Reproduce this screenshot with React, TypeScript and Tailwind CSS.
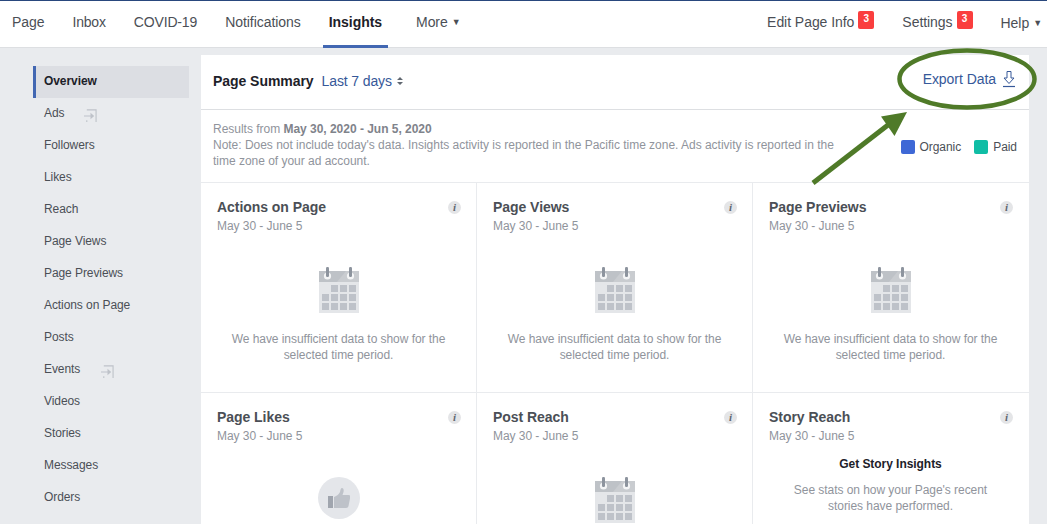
const SIDE_ITEMS = [
  'Ads',
  'Followers',
  'Likes',
  'Reach',
  'Page Views',
  'Page Previews',
  'Actions on Page',
  'Posts',
  'Events',
  'Videos',
  'Stories',
  'Messages',
  'Orders',
]

function Badge() {
  return (
    <span className="ml-1 mt-[10px] flex h-[18px] w-4 items-center justify-center self-start rounded-[2px] bg-[#fa3e3e] pb-[2px] text-[10px] font-bold text-white">
      3
    </span>
  )
}

function Caret() {
  return <span className="ml-1 text-[9px] leading-none text-[#4b4f56]">▼</span>
}

function EnterIcon() {
  return (
    <svg width="13" height="13" viewBox="0 0 14 14" fill="none" className="text-[#bec2c9]">
      <path d="M3 1h10v13" stroke="currentColor" strokeWidth="1.2" />
      <path d="M3 12v2" stroke="currentColor" strokeWidth="1.2" />
      <path d="M0 7h7V4l4 3.5L7 11V8.2H0z" fill="currentColor" />
    </svg>
  )
}

function InfoDot() {
  return (
    <span className="flex h-[13px] w-[13px] items-center justify-center rounded-full bg-[#e4e5e7] font-['Liberation_Serif',serif] text-[11px] font-bold italic leading-none text-[#606770]">
      i
    </span>
  )
}

function CalendarIcon() {
  return (
    <svg width="40" height="46" viewBox="0 0 40 46">
      <rect x="0" y="4" width="40" height="42" fill="#e4e6e9" />
      <rect x="0" y="4" width="40" height="11" fill="#bec2c7" />
      <path d="M18 15 27 4h13v11z" fill="#c9ccd0" />
      <circle cx="8.5" cy="9" r="3.6" fill="#f4f5f6" />
      <circle cx="31.5" cy="9" r="3.6" fill="#f4f5f6" />
      <rect x="7" y="0" width="3" height="10" rx="1.2" fill="#8d949e" />
      <rect x="30" y="0" width="3" height="10" rx="1.2" fill="#8d949e" />
      {[12, 21, 30].map((x) => (
        <rect key={x} x={x} y="18" width="7" height="7" fill="#bec2c9" />
      ))}
      {[3, 12, 21, 30].map((x) => (
        <g key={x}>
          <rect x={x} y="27" width="7" height="7" fill="#bec2c9" />
          <rect x={x} y="36" width="7" height="7" fill="#bec2c9" />
        </g>
      ))}
    </svg>
  )
}

function ThumbIcon() {
  return (
    <div className="flex h-[42px] w-[42px] items-center justify-center rounded-full bg-[#e4e6ea]">
      <svg width="22" height="22" viewBox="0 0 22 22">
        <rect x="0" y="9" width="5" height="12" fill="#a0a5ae" />
        <path
          d="M6 10c3-1 5-3 6-5 .4-2 .8-4 2-4 1.500 0 2 2 1.500 4l-1 3h6c1.500 0 2 1 1.800 2L20.500 19c-.3 1.200-1 2-2.500 2H6z"
          fill="#bec2c9"
        />
      </svg>
    </div>
  )
}

function Card({ title, children, last }: { title: string; children: React.ReactNode; last?: boolean }) {
  return (
    <div className={`relative h-[210px] border-b border-[#e9ebee] pt-[15px] pl-4 ${last ? 'pr-[17px]' : 'border-r pr-4'}`}>
      <div className="flex items-start justify-between">
        <h3 className="text-sm font-bold leading-[18px] text-[#4b4f56]">{title}</h3>
        <span className="mr-[-1px] mt-[3px]">
          <InfoDot />
        </span>
      </div>
      <p className="mt-[2px] text-xs leading-4 text-[#90949c]">May 30 - June 5</p>
      {children}
    </div>
  )
}

function EmptyCard({ title, last }: { title: string; last?: boolean }) {
  return (
    <Card title={title} last={last}>
      <div className="mt-[33px] flex justify-center">
        <CalendarIcon />
      </div>
      <p className="mx-auto mt-[18px] w-[230px] text-center text-xs leading-4 text-[#90949c]">
        We have insufficient data to show for the selected time period.
      </p>
    </Card>
  )
}

export default function App() {
  return (
    <div className="relative h-[524px] w-[1047px] overflow-hidden bg-[#e9ebee] font-['Liberation_Sans',Arial,sans-serif] tracking-[-0.05px]">
      <nav className="flex h-[48px] items-center justify-between border-t border-b border-t-[#29487d] border-b-[#dddfe2] bg-white pl-3 pr-[5px] text-sm text-[#4b4f56]">
        <div className="flex h-full items-center gap-7 pb-[4px]">
          <span>Page</span>
          <span className="tracking-[-0.2px]">Inbox</span>
          <span className="tracking-[-0.15px]">COVID-19</span>
          <span>Notifications</span>
          <span className="relative font-bold text-[#1d2129]">
            Insights
            <span className="absolute -left-[6px] -right-[6px] top-[33px] h-[3px] bg-[#4267b2]" />
          </span>
          <span className="ml-[6px] flex items-center">
            More
            <Caret />
          </span>
        </div>
        <div className="flex h-full items-center">
          <span className="mb-[4px]">Edit Page Info</span>
          <Badge />
          <span className="mb-[4px] ml-7">Settings</span>
          <Badge />
          <span className="mb-[2px] ml-7 flex items-center">
            Help
            <Caret />
          </span>
        </div>
      </nav>

      <div className="flex items-start pl-[33px] pt-[7px]">
        <aside className="mt-[11px] w-[156px] text-xs tracking-[-0.08px] text-[#4b4f56]">
          <div className="flex h-8 items-center border-l-[3px] border-[#4267b2] bg-[#dcdee3] pb-[2px] pl-2 font-bold text-[#1d2129]">
            Overview
          </div>
          {SIDE_ITEMS.map((item) => (
            <div key={item} className="flex h-8 items-center pl-[11px]">
              <span className="mb-[2px]">{item}</span>
              {item === 'Ads' && (
                <span className="ml-5 mt-[2px]">
                  <EnterIcon />
                </span>
              )}
              {item === 'Events' && (
                <span className="ml-[21px] mt-[2px]">
                  <EnterIcon />
                </span>
              )}
            </div>
          ))}
        </aside>

        <main className="ml-3 w-[828px] bg-white">
          <header className="flex h-[55px] items-center justify-between border-b border-[#dddfe2] pl-3 pr-[13px]">
            <div className="mb-[2px] flex items-center text-sm">
              <span className="font-bold text-[#1d2129]">Page Summary</span>
              <span className="ml-[8px] tracking-[-0.12px] text-[#365899]">Last 7 days</span>
              <svg width="6" height="8" viewBox="0 0 6 8" className="ml-[5px]">
                <path d="M3 0l3 3H0zM3 8L0 5h6z" fill="#606770" />
              </svg>
            </div>
            <div className="mb-[6px] flex items-center text-sm text-[#365899]">
              <span>Export Data</span>
              <svg width="14" height="17" viewBox="0 0 14 17" fill="none" className="ml-[6px]" stroke="#365899">
                <path d="M5 .5h4v6.500h3L7 12.500 2 7h3z" strokeWidth="1" />
                <path d="M1 15.500h12" strokeWidth="1.200" />
              </svg>
            </div>
          </header>

          <div className="flex h-[73px] items-start justify-between border-b border-[#e9ebee] pl-3 pr-3 pt-[11px]">
            <p className="w-[640px] text-xs leading-4 tracking-[-0.02px] text-[#90949c]">
              Results from <b className="text-[#7f838b]">May 30, 2020 - Jun 5, 2020</b>
              <br />
              Note: Does not include today's data. Insights activity is reported in the Pacific time zone. Ads activity
              is reported in the time zone of your ad account.
            </p>
            <div className="mt-[18px] flex items-center text-xs text-[#4b4f56]">
              <span className="h-[14px] w-[14px] rounded-[2px] bg-[#3e68d6]" />
              <span className="ml-[5px]">Organic</span>
              <span className="ml-[13px] h-[14px] w-[14px] rounded-[2px] bg-[#10bda5]" />
              <span className="ml-[5px]">Paid</span>
            </div>
          </div>

          <div className="grid grid-cols-3">
            <EmptyCard title="Actions on Page" />
            <EmptyCard title="Page Views" />
            <EmptyCard title="Page Previews" last />
            <Card title="Page Likes">
              <div className="mt-[33px] flex justify-center">
                <ThumbIcon />
              </div>
            </Card>
            <Card title="Post Reach">
              <div className="mt-[33px] flex justify-center">
                <CalendarIcon />
              </div>
            </Card>
            <Card title="Story Reach" last>
              <p className="mt-3 text-center text-xs font-bold leading-4 text-[#1d2129]">Get Story Insights</p>
              <p className="mx-auto mt-[10px] w-[220px] text-center text-xs leading-4 text-[#90949c]">
                See stats on how your Page's recent stories have performed.
              </p>
            </Card>
          </div>
        </main>
      </div>

      {/* green annotation drawn over the screenshot */}
      <svg width="1047" height="524" viewBox="0 0 1047 524" fill="none" className="pointer-events-none absolute left-0 top-0">
        <ellipse cx="967" cy="79" rx="67.500" ry="28.500" stroke="#4f7a28" strokeWidth="4.500" />
        <path d="M813 183 888 125" stroke="#4f7a28" strokeWidth="5" />
        <path d="M907 112 881 116.500 894.500 136z" fill="#4f7a28" />
      </svg>
    </div>
  )
}
